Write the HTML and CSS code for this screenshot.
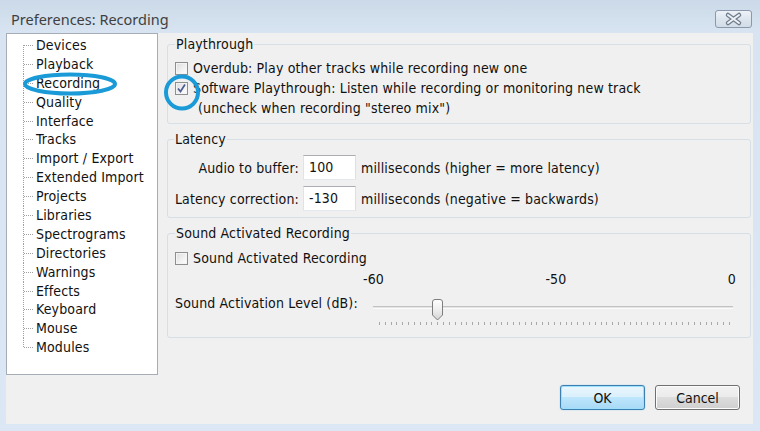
FILE: index.html
```html
<!DOCTYPE html>
<html lang="en">
<head>
<meta charset="utf-8">
<title>Preferences: Recording</title>
<link rel="stylesheet" href="styles.css">
</head>
<body>
<div class="window">
  <div class="titlebar">
    <span class="title">Preferences: Recording</span>
    <button class="close" aria-label="Close">
      <svg width="35" height="16" viewBox="0 0 35 16">
        <path d="M12 4 L23 12 M23 4 L12 12" stroke="#6f7c8c" stroke-width="4.5" stroke-linecap="round" fill="none"/>
        <path d="M12 4 L23 12 M23 4 L12 12" stroke="#eef1f5" stroke-width="2" stroke-linecap="round" fill="none"/>
      </svg>
    </button>
  </div>

  <div class="client">
    <div class="content">
      <ul class="tree">
        <li>Devices</li>
        <li>Playback</li>
        <li>Recording</li>
        <li>Quality</li>
        <li>Interface</li>
        <li>Tracks</li>
        <li>Import / Export</li>
        <li>Extended Import</li>
        <li>Projects</li>
        <li>Libraries</li>
        <li>Spectrograms</li>
        <li>Directories</li>
        <li>Warnings</li>
        <li>Effects</li>
        <li>Keyboard</li>
        <li>Mouse</li>
        <li>Modules</li>
      </ul>

      <div class="panel">
        <fieldset class="group playthrough">
          <legend>Playthrough</legend>
          <label class="check"><span class="box"></span>Overdub: Play other tracks while recording new one</label>
          <label class="check"><span class="box checked"><svg width="11" height="11" viewBox="0 0 11 11"><path d="M2 5.5 L4.5 8.5 L9 1.5" stroke="#4b5e93" stroke-width="1.7" fill="none"/></svg></span>Software Playthrough: Listen while recording or monitoring new track</label>
          <div class="note">(uncheck when recording "stereo mix")</div>
        </fieldset>

        <fieldset class="group latency">
          <legend>Latency</legend>
          <div class="form">
            <span class="lbl">Audio to buffer:</span>
            <span class="field">100</span>
            <span class="unit">milliseconds (higher = more latency)</span>
            <span class="lbl">Latency correction:</span>
            <span class="field">-130</span>
            <span class="unit">milliseconds (negative = backwards)</span>
          </div>
        </fieldset>

        <fieldset class="group sound">
          <legend>Sound Activated Recording</legend>
          <label class="check"><span class="box"></span>Sound Activated Recording</label>
          <div class="level">
            <span class="level-label">Sound Activation Level (dB):</span>
            <div class="slider">
              <div class="scale"><span>-60</span><span>-50</span><span>0</span></div>
              <div class="rail">
                <div class="track"></div>
                <svg class="thumb" width="11" height="22" viewBox="0 0 11 22">
                  <defs>
                    <linearGradient id="thumbFill" x1="0" y1="0" x2="0" y2="1">
                      <stop offset="0" stop-color="#ffffff"/>
                      <stop offset="0.5" stop-color="#eeeeee"/>
                      <stop offset="1" stop-color="#d4d4d4"/>
                    </linearGradient>
                  </defs>
                  <path d="M0.5 3 Q0.5 0.5 3 0.5 H8 Q10.5 0.5 10.5 3 V16 L5.5 21 L0.5 16 Z" fill="url(#thumbFill)" stroke="#7d7d7d"/>
                </svg>
              </div>
              <div class="ticks"></div>
            </div>
          </div>
        </fieldset>
      </div>
    </div>

    <div class="buttons">
      <button class="btn default">OK</button>
      <button class="btn">Cancel</button>
    </div>
  </div>

  <!-- blue hand-drawn highlight marks -->
  <svg class="marks" width="760" height="431" viewBox="0 0 760 431">
    <ellipse cx="70" cy="84" rx="45" ry="9.5" fill="none" stroke="#1b9ad8" stroke-width="4"/>
    <circle cx="182" cy="92.5" r="16" fill="none" stroke="#1b9ad8" stroke-width="4"/>
  </svg>
</div>
</body>
</html>
```

FILE: styles.css
```css
* {
  box-sizing: border-box;
}

html,
body {
  margin: 0;
  padding: 0;
}

body {
  width: 760px;
  height: 431px;
  overflow: hidden;
  font-family: "DejaVu Sans Condensed", "Liberation Sans", sans-serif;
  font-size: 14px;
  letter-spacing: 0.15px;
  color: #111;
}

.window {
  position: relative;
  width: 760px;
  height: 431px;
  display: flex;
  flex-direction: column;
  background: linear-gradient(to bottom, #cbd9e8 0, #d8e4f1 33px, #dbe7f4 100%);
}

/* caption */
.titlebar {
  height: 33px;
  display: flex;
  align-items: flex-start;
  padding: 0 8px 0 11px;
}

.title {
  margin-top: 9px;
  font-family: "Noto Sans", "Open Sans", sans-serif;
  font-size: 14.5px;
  letter-spacing: 0;
  line-height: 20px;
  color: #3f3f3f;
}

.close {
  margin: 10px 0 0 auto;
  width: 37px;
  height: 18px;
  padding: 0;
  border: 1px solid #8a98aa;
  border-radius: 3px;
  background: linear-gradient(to bottom, #eef2f7, #dde5ee 50%, #d2dce8);
  display: flex;
  align-items: center;
  justify-content: center;
}

/* dialog body */
.client {
  margin: 0 7px 7px 6px;
  height: 391px;
  background: #f0f0f0;
  display: flex;
  flex-direction: column;
}

.content {
  display: flex;
  height: 342px;
}

/* category tree */
.tree {
  margin: 0;
  padding: 2px 0 0;
  list-style: none;
  width: 152px;
  height: 342px;
  flex: none;
  background-color: #fff;
  border: 1px solid #a6adb6;
}

.tree li {
  height: 18.9px;
  line-height: 18.9px;
  padding-left: 29px;
  white-space: nowrap;
  background-image:
    repeating-linear-gradient(to bottom, #a0a0a0 0 1px, transparent 1px 2px),
    repeating-linear-gradient(to right, #a0a0a0 0 1px, transparent 1px 2px);
  background-size: 1px 100%, 10px 1px;
  background-position: 16px 0, 17px 9px;
  background-repeat: no-repeat;
}

.tree li:first-child {
  background-size: 1px 50%, 10px 1px;
  background-position: 16px 100%, 17px 9px;
}

.tree li:last-child {
  background-size: 1px 10px, 10px 1px;
  background-position: 16px 0, 17px 9px;
}

/* settings panel */
.panel {
  flex: 1;
  margin: 0 2px 0 9px;
  padding-top: 3px;
  display: flex;
  flex-direction: column;
  gap: 7px;
}

.group {
  margin: 0;
  min-width: 0;
  border: 1px solid #d5dfe5;
  border-radius: 3px;
  padding: 0 7px;
}

.group legend {
  padding: 0 1px;
  line-height: 16px;
}

.playthrough {
  padding-top: 6px;
  padding-bottom: 5px;
}

.check {
  display: flex;
  align-items: center;
  height: 20px;
  gap: 5px;
  white-space: nowrap;
}

.box {
  width: 13px;
  height: 13px;
  flex: none;
  border: 1px solid #8e8f8f;
  background: linear-gradient(135deg, #dcdcdc, #f6f6f6 70%, #ffffff);
  box-shadow: inset 0 0 0 1px #f4f4f4;
  display: flex;
  align-items: center;
  justify-content: center;
}

.note {
  height: 20px;
  line-height: 20px;
  padding-left: 23px;
}

.latency {
  padding: 8px 7px 6px 6px;
}

.form {
  display: grid;
  grid-template-columns: 125px 53px auto;
  grid-auto-rows: 25px;
  column-gap: 4px;
  row-gap: 6px;
  align-items: center;
}

.lbl {
  justify-self: end;
  white-space: nowrap;
}

.field {
  height: 25px;
  line-height: 23px;
  padding-left: 5px;
  background: #fff;
  border: 1px solid;
  border-color: #abadb3 #dbdfe6 #e3e9ef #e2e3ea;
}

.unit {
  margin-left: 1px;
  white-space: nowrap;
}

.sound {
  padding: 7px 14px 12px 7px;
}

.level {
  display: flex;
  margin-top: 2px;
}

.level-label {
  width: 188px;
  flex: none;
  padding-top: 25px;
  line-height: 16px;
  white-space: nowrap;
}

.slider {
  flex: 1;
}

.scale {
  height: 18px;
  line-height: 18px;
  display: flex;
  justify-content: space-between;
}

.rail {
  position: relative;
  height: 34px;
  padding-top: 18px;
}

.track {
  margin: 0 3px 0 10px;
  height: 3px;
  border-top: 1px solid #c2c2c2;
  border-bottom: 1px solid #fbfbfb;
  background: #e4e4e4;
}

.thumb {
  position: absolute;
  top: 11px;
  left: 69px;
}

.ticks {
  margin-left: 16px;
  width: 351px;
  height: 3px;
  background: repeating-linear-gradient(to right, #a8a8a8 0 1px, transparent 1px 5.8333px);
}

/* dialog buttons */
.buttons {
  display: flex;
  justify-content: flex-end;
  gap: 10px;
  padding: 10px 13px 0 0;
}

.btn {
  width: 85px;
  height: 25px;
  padding: 0;
  font: inherit;
  color: #111;
  border: 1px solid #707070;
  border-radius: 3px;
  background: linear-gradient(to bottom, #f2f2f2 0, #ebebeb 50%, #dddddd 50%, #cfcfcf 100%);
  box-shadow: inset 0 0 0 1px #fcfcfc;
}

.btn.default {
  border-color: #3c7fb1;
  background: linear-gradient(to bottom, #eaf6fd 0, #d9f0fc 50%, #bee6fd 50%, #a7d9f5 100%);
  box-shadow: inset 0 0 0 1px #9ee0fb, 0 0 1px #48a6e0;
}

/* annotation overlay */
.marks {
  position: absolute;
  top: 0;
  left: 0;
  pointer-events: none;
}
```
